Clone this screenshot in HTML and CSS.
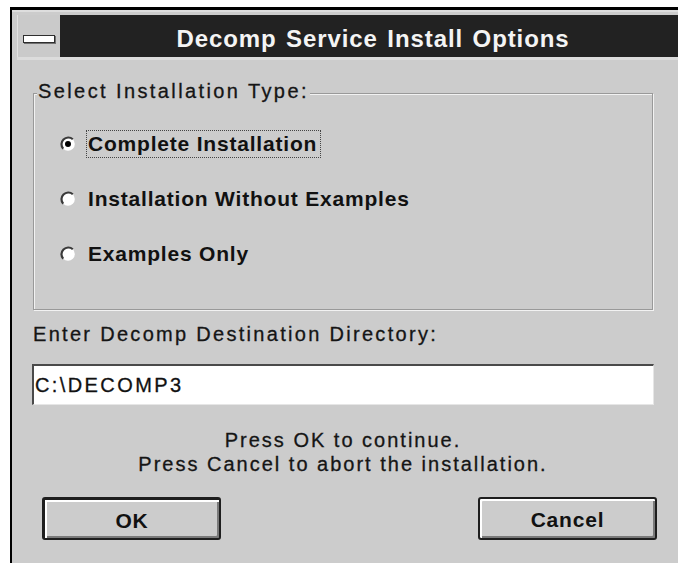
FILE: index.html
```html
<!DOCTYPE html>
<html lang="en">
<head>
<meta charset="utf-8">
<title>Decomp Service Install Options</title>
<link rel="stylesheet" href="styles.css">
</head>
<body>
<div class="window">
  <div class="titlebar">
    <div class="sysmenu"><span class="sysbar"></span></div>
    <div class="caption">Decomp Service Install Options</div>
  </div>
  <div class="client">
    <fieldset class="group">
      <legend class="group-label">Select Installation Type:</legend>
      <div class="options">
        <label class="option">
          <svg class="radio" viewBox="0 0 16 16" width="16" height="16" aria-hidden="true">
            <circle cx="8" cy="8" r="6.8" fill="#fff"/>
            <path d="M12.8 3.2 A6.8 6.8 0 0 0 3.2 12.8" fill="none" stroke="#3a3a3a" stroke-width="2.2"/>
            <circle cx="8" cy="8" r="3" fill="#000"/>
          </svg>
          <span class="option-text focused">Complete Installation</span>
        </label>
        <label class="option">
          <svg class="radio" viewBox="0 0 16 16" width="16" height="16" aria-hidden="true">
            <circle cx="8" cy="8" r="6.8" fill="#fff"/>
            <path d="M12.8 3.2 A6.8 6.8 0 0 0 3.2 12.8" fill="none" stroke="#3a3a3a" stroke-width="2.2"/>
          </svg>
          <span class="option-text">Installation Without Examples</span>
        </label>
        <label class="option">
          <svg class="radio" viewBox="0 0 16 16" width="16" height="16" aria-hidden="true">
            <circle cx="8" cy="8" r="6.8" fill="#fff"/>
            <path d="M12.8 3.2 A6.8 6.8 0 0 0 3.2 12.8" fill="none" stroke="#3a3a3a" stroke-width="2.2"/>
          </svg>
          <span class="option-text">Examples Only</span>
        </label>
      </div>
    </fieldset>

    <div class="field-label">Enter Decomp Destination Directory:</div>
    <div class="edit">C:\DECOMP3</div>

    <p class="note">Press OK to continue.<br>Press Cancel to abort the installation.</p>

    <div class="buttons">
      <button class="btn btn-default" type="button">OK</button>
      <button class="btn" type="button">Cancel</button>
    </div>
  </div>
</div>
</body>
</html>
```

FILE: styles.css
```css
html, body {
  margin: 0;
  padding: 0;
  background: #ffffff;
  overflow: hidden;
}

body {
  width: 678px;
  height: 563px;
  font-family: "Liberation Sans", Arial, sans-serif;
  color: #111;
}

/* dialog window, runs past the right and bottom edges */
.window {
  margin: 7px 0 0 10px;
  width: 680px;
  height: 570px;
  border-top: 3px solid #000;
  border-left: 2px solid #000;
  background: #cccccc;
  box-shadow: inset 0 2px 0 #dedede;
}

/* caption bar */
.titlebar {
  display: flex;
  height: 42px;
  margin: 5px 6px 0 5px;
  border-bottom: 3px solid #dcdcdc;
}

.sysmenu {
  width: 43px;
  flex: none;
  background: #cacaca;
  box-shadow: inset 1px 0 0 #e2e2e2;
  display: flex;
  align-items: flex-start;
  padding-top: 20px;
  padding-left: 6px;
  box-sizing: border-box;
}

.sysbar {
  display: block;
  width: 30px;
  height: 6px;
  background: #ffffff;
  border: 1px solid #2e2e2e;
  box-shadow: 1px 1px 0 #707070;
}

.caption {
  flex: 1;
  background: #222222;
  color: #f4f4f4;
  text-align: center;
  font-weight: bold;
  font-size: 24px;
  letter-spacing: 0.9px;
  word-spacing: 2px;
  line-height: 37px;
  padding-top: 5px;
  box-sizing: border-box;
}

/* dialog client area */
.client {
  padding-left: 21px;
  width: 620px;
}

.group {
  margin: 20px 0 0 0;
  padding: 0;
  width: 618px;
  height: 228px;
  box-sizing: content-box;
  border: 1px solid #999999;
  box-shadow: inset 1px 1px 0 #f2f2f2, 1px 1px 0 #f2f2f2;
  min-width: 0;
}

.group-label {
  margin-left: 3px;
  padding: 0 1px 4px;
  background: #cccccc;
  font-size: 20px;
  line-height: 22px;
  letter-spacing: 2.4px;
  color: #151515;
  -webkit-text-stroke: 0.3px #151515;
}

.options {
  margin-top: 24px;
  display: flex;
  flex-direction: column;
  gap: 27px;
}

.option {
  display: flex;
  align-items: center;
  height: 28px;
  margin-left: 26px;
  gap: 10px;
}

.radio {
  flex: none;
  display: block;
}

.option-text {
  font-weight: bold;
  font-size: 21px;
  letter-spacing: 0.8px;
  line-height: 26px;
  padding: 0 3px 0 1px;
  border: 1px solid transparent;
  color: #111;
}

.option-text.focused {
  border: 1px dotted #444;
}

.field-label {
  margin-top: 12px;
  font-size: 20px;
  line-height: 24px;
  letter-spacing: 2.3px;
  color: #151515;
  -webkit-text-stroke: 0.3px #151515;
}

/* single-line edit control */
.edit {
  margin: 18px 0 0 -1px;
  width: 622px;
  height: 41px;
  box-sizing: border-box;
  background: #ffffff;
  border-top: 2px solid #4a4a4a;
  border-left: 2px solid #4a4a4a;
  border-right: 1px solid #e6e6e6;
  border-bottom: 1px solid #e6e6e6;
  padding-left: 1px;
  font-size: 20px;
  line-height: 38px;
  letter-spacing: 2.4px;
  color: #111;
  -webkit-text-stroke: 0.3px #111;
}

.note {
  margin: 23px 0 0 0;
  text-align: center;
  font-size: 20px;
  line-height: 24px;
  letter-spacing: 2px;
  color: #151515;
  -webkit-text-stroke: 0.3px #151515;
}

.buttons {
  display: flex;
  justify-content: space-between;
  margin: 21px 0 0 9px;
  width: 615px;
}

.btn {
  width: 179px;
  height: 43px;
  box-sizing: border-box;
  background: #cccccc;
  border: 2px solid #1e1e1e;
  border-radius: 3px;
  box-shadow: inset 2px 2px 0 #ffffff, inset -2px -2px 0 #7a7a7a;
  padding: 2px 0 0 0;
  font-family: "Liberation Sans", Arial, sans-serif;
  font-weight: bold;
  font-size: 21px;
  letter-spacing: 0.8px;
  line-height: 37px;
  color: #111;
  text-align: center;
}

.btn-default {
  border-width: 3px 2px 2px 3px;
}
```
